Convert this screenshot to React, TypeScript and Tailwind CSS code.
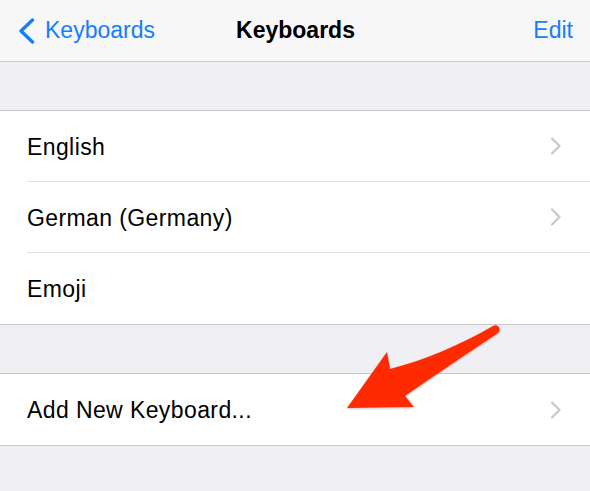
const sections = [["English", "German (Germany)", "Emoji"], ["Add New Keyboard..."]];

function Chevron() {
  return (
    <svg width="12" height="18" viewBox="0 0 12 18" className="shrink-0">
      <path d="M2 1.5 L9.5 9 L2 16.5" fill="none" stroke="#c7c7cc" strokeWidth="2.2" strokeLinecap="round" strokeLinejoin="round" />
    </svg>
  );
}

function Row({ label, chevron, last }: { label: string; chevron: boolean; last: boolean }) {
  return (
    <div className="flex h-[71px] items-center pl-[27px] bg-white">
      <div className={`flex h-full flex-1 items-center pr-[28px] ${last ? "" : "border-b border-[#e0e0e3]"}`}>
        <span className="flex-1 pt-[2px] text-[23px] tracking-[0.4px] text-black">{label}</span>
        {chevron && <Chevron />}
      </div>
    </div>
  );
}

function Arrow() {
  return (
    <svg className="pointer-events-none absolute left-0 top-0" width="590" height="491" viewBox="0 0 590 491">
      <defs>
        <filter id="sh" x="-20%" y="-20%" width="140%" height="140%">
          <feDropShadow dx="0" dy="1" stdDeviation="1" floodColor="#000" floodOpacity="0.25" />
        </filter>
      </defs>
      <path
        d="M347 408 L387 352 L390 369 C425 360 460 345 493 326 C498 323 502 330 498 333 C465 355 435 375 405 396 L414 407 Z"
        fill="#ff2a00"
        filter="url(#sh)"
      />
    </svg>
  );
}

export default function App() {
  return (
    <div className="relative h-[491px] w-[590px] overflow-hidden bg-[#efeff4] font-['Liberation_Sans',Arial,sans-serif]">
      {/* Nav bar */}
      <div className="flex h-[62px] items-center border-b border-[#c8c7cc] bg-[#f7f7f7] pl-[18px] pr-[17px]">
        <div className="flex flex-1 items-center gap-[10px] text-[23px] text-[#157efb]">
          <svg width="17" height="26" viewBox="0 0 17 26">
            <path d="M14.5 2 L3 13 L14.5 24" fill="none" stroke="#157efb" strokeWidth="3.4" strokeLinecap="round" strokeLinejoin="round" />
          </svg>
          <span>Keyboards</span>
        </div>
        <span className="text-[23px] font-bold text-black">Keyboards</span>
        <div className="flex flex-1 justify-end text-[23px] text-[#157efb]">Edit</div>
      </div>

      {sections.map((items, si) => (
        <div key={si} className="mt-[48px] border-y border-[#c8c7cc]">
          {items.map((label, i) => (
            <Row key={label} label={label} chevron={label !== "Emoji"} last={i === items.length - 1} />
          ))}
        </div>
      ))}

      <Arrow />
    </div>
  );
}
